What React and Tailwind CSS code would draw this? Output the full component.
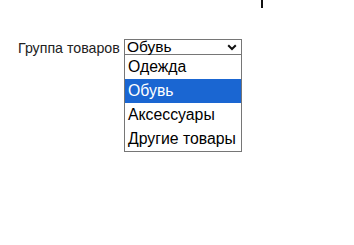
import React from "react";

export default function App() {
  return (
    <div
      className="w-[354px] h-[245px] bg-white text-[#222] overflow-hidden"
      style={{ fontFamily: '"Liberation Sans", Arial, sans-serif' }}
    >
      <div className="h-[8px] flex">
        <div className="ml-[261px] w-[2px] h-[8px] bg-[#111]" />
      </div>
      <div className="mt-[31px] flex items-start pl-[18px]">
        <div className="w-[106px] h-[16px] text-[14.2px] leading-[18px] whitespace-nowrap">
          Группа товаров
        </div>
        <div className="relative w-[118px]">
          <div className="h-[16px] border border-[#767676] bg-white flex items-center justify-between pl-[2px] pr-[3px]">
            <span className="text-[15.5px] leading-[14px] text-black">Обувь</span>
            <svg width="10" height="7" viewBox="0 0 10 7" className="mr-[1px]">
              <path d="M1.2 1.2 L5 5 L8.8 1.2" fill="none" stroke="#111" strokeWidth="2" />
            </svg>
          </div>
          <div className="absolute top-[16px] left-0 w-[118px] border border-[#767676] border-t-0 bg-white text-[15.8px] text-black">
            <div className="h-[24px] leading-[24px] pl-[3px]">Одежда</div>
            <div className="h-[24px] leading-[24px] pl-[3px] bg-[#1a66d2] text-white">Обувь</div>
            <div className="h-[24px] leading-[24px] pl-[3px]">Аксессуары</div>
            <div className="h-[24px] leading-[24px] pl-[3px]">Другие товары</div>
          </div>
        </div>
      </div>
    </div>
  );
}
